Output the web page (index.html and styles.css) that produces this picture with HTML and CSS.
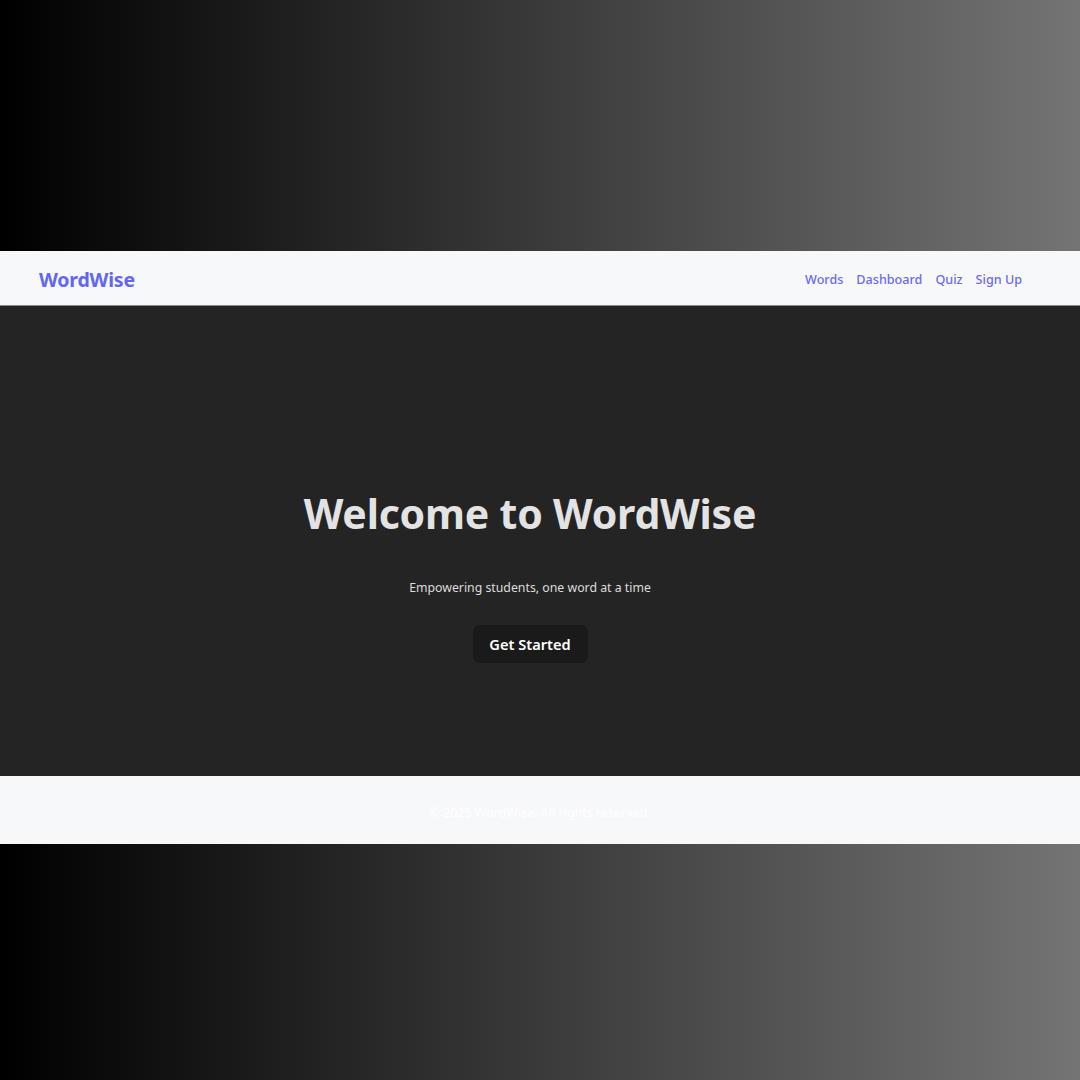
FILE: index.html
```html
<!DOCTYPE html>
<html lang="en">
<head>
<meta charset="utf-8">
<title>WordWise</title>
<link rel="stylesheet" href="styles.css">
</head>
<body>
<div class="frame">
  <header class="nav">
    <div class="logo">WordWise</div>
    <nav class="links">
      <a href="#">Words</a>
      <a href="#">Dashboard</a>
      <a href="#">Quiz</a>
      <a href="#">Sign Up</a>
    </nav>
  </header>
  <main class="hero">
    <h1>Welcome to WordWise</h1>
    <p>Empowering students, one word at a time</p>
    <button class="cta">Get Started</button>
  </main>
  <footer class="footer">© 2025 WordWise. All rights reserved.</footer>
</div>
</body>
</html>
```
FILE: styles.css
```css
html, body {
  margin: 0;
  padding: 0;
}
body {
  width: 1080px;
  height: 1080px;
  background: linear-gradient(to right, #000000, #747474);
  font-family: "Noto Sans", "Open Sans", sans-serif;
  padding-top: 251px;
  box-sizing: border-box;
}
.frame {
  display: flex;
  flex-direction: column;
  height: 593px;
}
.nav {
  background: #f7f8fa;
  border-bottom: 1px solid #8a8a8a;
  display: flex;
  align-items: center;
  justify-content: space-between;
  padding: 2px 58px 0 39px;
  box-sizing: border-box;
  height: 55px;
}
.logo {
  color: #6366f1;
  font-weight: 700;
  font-size: 19.5px;
  letter-spacing: -0.2px;
}
.links {
  display: flex;
  gap: 13px;
}
.links a {
  color: #6a6cf0;
  font-size: 12.6px;
  font-weight: 500;
  text-decoration: none;
}
.hero {
  flex: 1;
  background: #242424;
  display: flex;
  flex-direction: column;
  align-items: center;
  justify-content: center;
  padding: 70px 20px 0 0;
}
.hero h1 {
  margin: 0;
  color: #e3e3e3;
  font-size: 41px;
  font-weight: 700;
  line-height: 1.2;
  letter-spacing: -0.2px;
}
.hero p {
  margin: 41px 0 0;
  color: #dcdcdc;
  font-size: 12.3px;
}
.cta {
  margin-top: 29px;
  width: 115px;
  height: 38px;
  background: #1a1a1a;
  border: none;
  border-radius: 7px;
  color: #ffffff;
  font-family: inherit;
  font-size: 14.6px;
  font-weight: 600;
}
.footer {
  height: 68px;
  background: #f7f8fa;
  color: #ffffff;
  font-size: 12.5px;
  display: flex;
  align-items: center;
  justify-content: center;
  padding-top: 4px;
  box-sizing: border-box;
}
```
